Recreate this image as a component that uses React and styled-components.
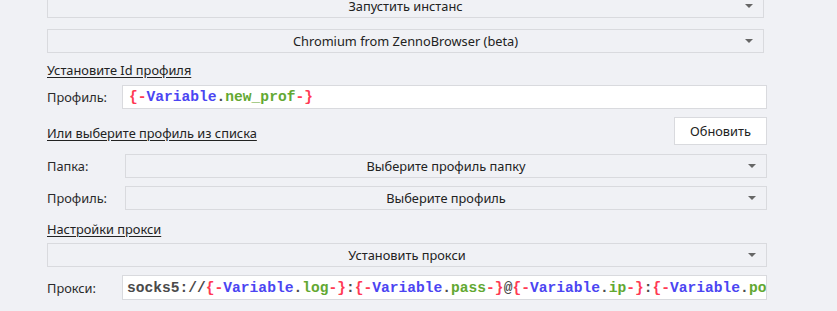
import React from "react";
import styled, { createGlobalStyle } from "styled-components";

const Global = createGlobalStyle`
  html, body { margin: 0; padding: 0; background: #f0f1f5; }
  body { width: 837px; height: 311px; overflow: hidden; }
`;

const Page = styled.div`
  width: 837px;
  height: 311px;
  overflow: hidden;
  background: #f0f1f5;
  font-family: "Noto Sans", "Open Sans", sans-serif;
  font-size: 12.8px;
  color: #1e1e1e;
`;

const Column = styled.div`
  display: flex;
  flex-direction: column;
  width: 720px;
  margin-left: 47px;
`;

const Select = styled.div`
  position: relative;
  box-sizing: border-box;
  flex: 1;
  height: 24px;
  margin-right: ${(p) => p.$mr || 0}px;
  border: 1px solid #d9dade;
  background: #f0f1f5;
  display: flex;
  align-items: center;
  justify-content: center;
  color: #222;
`;

const Arrow = styled.span`
  position: absolute;
  right: 10px;
  top: 50%;
  margin-top: -2px;
  width: 0;
  height: 0;
  border-left: 4px solid transparent;
  border-right: 4px solid transparent;
  border-top: 4px solid #666;
`;

const SectionLabel = styled.div`
  margin-top: ${(p) => p.$mt || 0}px;
  padding-top: ${(p) => p.$pt || 0}px;
  height: 18px;
  line-height: 18px;
  text-decoration: underline;
  text-underline-offset: 2px;
  color: #222;
`;

const Row = styled.div`
  display: flex;
  align-items: center;
  margin-top: ${(p) => p.$mt || 0}px;
  height: ${(p) => p.$h || 24}px;
`;

const FieldLabel = styled.div`
  width: ${(p) => p.$w}px;
  flex: none;
  color: #2a2a2a;
`;

const Input = styled.div`
  box-sizing: border-box;
  flex: 1;
  height: 100%;
  background: #fff;
  border: 1px solid #d9dade;
  display: flex;
  align-items: center;
  padding-left: ${(p) => p.$pl || 6}px;
  overflow: hidden;
  white-space: nowrap;
  font-family: "Liberation Mono", "Courier New", monospace;
  font-size: 14.6px;
  font-weight: bold;
`;

const Button = styled.div`
  box-sizing: border-box;
  width: 93px;
  height: 28px;
  margin-left: auto;
  background: #fff;
  border: 1px solid #d9dade;
  display: flex;
  align-items: center;
  justify-content: center;
  color: #222;
`;

const Tok = styled.span`
  color: ${(p) =>
    p.$k === "br" ? "#ff3a55" : p.$k === "v" ? "#4b45f2" : p.$k === "n" ? "#62a832" : "#4a4a4a"};
`;

const VarRef = ({ name }) => (
  <>
    <Tok $k="br">{"{-"}</Tok>
    <Tok $k="v">Variable</Tok>
    <Tok $k="d">.</Tok>
    <Tok $k="n">{name}</Tok>
    <Tok $k="br">{"-}"}</Tok>
  </>
);

const Dropdown = ({ children, ...rest }) => (
  <Select {...rest}>
    {children}
    <Arrow />
  </Select>
);

export default function App() {
  return (
    <Page>
      <Global />
      <Column>
        <Row $mt={-6}>
          <Dropdown $mr={3}>Запустить инстанс</Dropdown>
        </Row>
        <Row $mt={11}>
          <Dropdown $mr={3}>Chromium from ZennoBrowser (beta)</Dropdown>
        </Row>
        <SectionLabel $mt={8}>Установите Id профиля</SectionLabel>
        <Row $mt={6}>
          <FieldLabel $w={75}>Профиль:</FieldLabel>
          <Input>
            <VarRef name="new_prof" />
          </Input>
        </Row>
        <Row $mt={8} $h={28}>
          <SectionLabel $pt={3}>Или выберите профиль из списка</SectionLabel>
          <Button>Обновить</Button>
        </Row>
        <Row $mt={9}>
          <FieldLabel $w={78}>Папка:</FieldLabel>
          <Dropdown>Выберите профиль папку</Dropdown>
        </Row>
        <Row $mt={8}>
          <FieldLabel $w={78}>Профиль:</FieldLabel>
          <Dropdown>Выберите профиль</Dropdown>
        </Row>
        <SectionLabel $mt={10}>Настройки прокси</SectionLabel>
        <Row $mt={5}>
          <Dropdown>Установить прокси</Dropdown>
        </Row>
        <Row $mt={8} $h={25}>
          <FieldLabel $w={75}>Прокси:</FieldLabel>
          <Input $pl={4}>
            <Tok $k="d">socks5://</Tok>
            <VarRef name="log" />
            <Tok $k="d">:</Tok>
            <VarRef name="pass" />
            <Tok $k="d">@</Tok>
            <VarRef name="ip" />
            <Tok $k="d">:</Tok>
            <Tok $k="br">{"{-"}</Tok>
            <Tok $k="v">Variable</Tok>
            <Tok $k="d">.</Tok>
            <Tok $k="n">port</Tok>
            <Tok $k="br">{"-}"}</Tok>
          </Input>
        </Row>
      </Column>
    </Page>
  );
}
